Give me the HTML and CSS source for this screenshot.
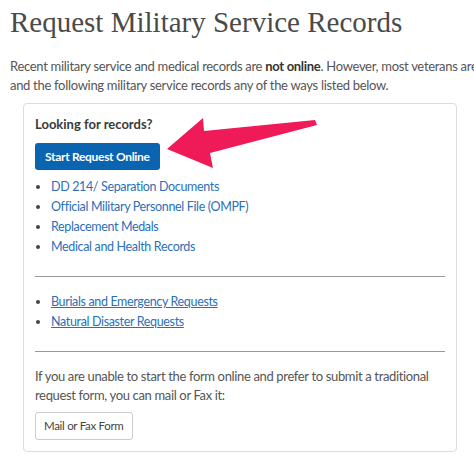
FILE: index.html
```
<!DOCTYPE html>
<html lang="en">
<head>
    <meta charset="UTF-8">
    <meta name="viewport" content="width=device-width, initial-scale=1.0">
    <title>Request Military Service Records</title>
    <link rel="stylesheet" href="styles.css">
</head>
<body>
    <div class="page">
        <h1>Request Military Service Records</h1>
        <p class="intro">
            <span class="line">Recent military service and medical records are <strong>not online</strong>. However, most veterans are able to request their DD214</span>
            <span class="line">and the following military service records any of the ways listed below.</span>
        </p>

        <div class="card">
            <p class="card-title">Looking for records?</p>
            <div class="start-row">
                <a class="btn btn-primary" href="#">Start Request Online</a>
                <svg class="arrow" width="160" height="60" viewBox="160 112 160 60">
                    <polygon points="167,148 203,117 204,130 315,119 317,124 210,152 213,167" fill="#ee1b58"/>
                </svg>
            </div>
            <ul class="links">
                <li><a href="#">DD 214/ Separation Documents</a></li>
                <li><a href="#">Official Military Personnel File (OMPF)</a></li>
                <li><a href="#">Replacement Medals</a></li>
                <li><a href="#">Medical and Health Records</a></li>
            </ul>
            <hr>
            <ul class="links underlined">
                <li><a href="#">Burials and Emergency Requests</a></li>
                <li><a href="#">Natural Disaster Requests</a></li>
            </ul>
            <hr>
            <p class="note">If you are unable to start the form online and prefer to submit a traditional request form, you can mail or Fax it:</p>
            <a class="btn btn-plain" href="#">Mail or Fax Form</a>
        </div>
    </div>
</body>
</html>
```

FILE: styles.css
```
body {
    margin: 0;
    background-color: #fff;
    color: #555;
    font-family: 'Lato', sans-serif;
    overflow: hidden;
}

.page {
    padding: 0 10px;
    overflow: hidden;
}

h1 {
    font-family: 'Liberation Serif', serif;
    font-weight: normal;
    font-size: 29px;
    color: #4a4a4a;
    margin: 6px 0 0;
    line-height: 32px;
    white-space: nowrap;
}

.intro {
    font-size: 13px;
    letter-spacing: -0.3px;
    line-height: 19px;
    margin: 19px 0 8px;
    color: #555;
}

.intro .line {
    display: block;
    white-space: nowrap;
}

.intro strong {
    color: #333;
}

.card {
    width: 410px;
    margin-left: 13px;
    border: 1px solid #dcdcdc;
    border-radius: 4px;
    padding: 10px 11px 11px;
}

.card-title {
    font-weight: bold;
    font-size: 13px;
    color: #3a3a3a;
    margin: 2px 0 11px;
}

.start-row {
    position: relative;
    height: 27px;
}

.arrow {
    position: absolute;
    left: 125px;
    top: -30px;
}

.btn {
    display: inline-block;
    text-decoration: none;
    font-size: 12px;
    border-radius: 3px;
    box-sizing: border-box;
}

.btn-primary {
    background-color: #0b64b0;
    color: #fff;
    font-weight: bold;
    height: 27px;
    line-height: 27px;
    padding: 0 10px;
    letter-spacing: -0.3px;
}

.btn-plain {
    border: 1px solid #ccc;
    color: #444;
    height: 28px;
    line-height: 26px;
    padding: 0 8px;
    background-color: #fff;
    font-size: 11.5px;
    letter-spacing: -0.3px;
}

.links {
    margin: 7px 0 0;
    padding-left: 16px;
    font-size: 12.5px;
    letter-spacing: -0.35px;
    line-height: 20px;
}

.links li {
    color: #444;
}

.links a {
    color: #2c6fb8;
    text-decoration: none;
}

.underlined a {
    text-decoration: underline;
}

hr {
    border: none;
    border-top: 1px solid #999;
    margin: 19px 0 15px;
}

.note {
    font-size: 13px;
    letter-spacing: -0.35px;
    line-height: 19px;
    margin: 0 0 7px;
    color: #555;
}
```
